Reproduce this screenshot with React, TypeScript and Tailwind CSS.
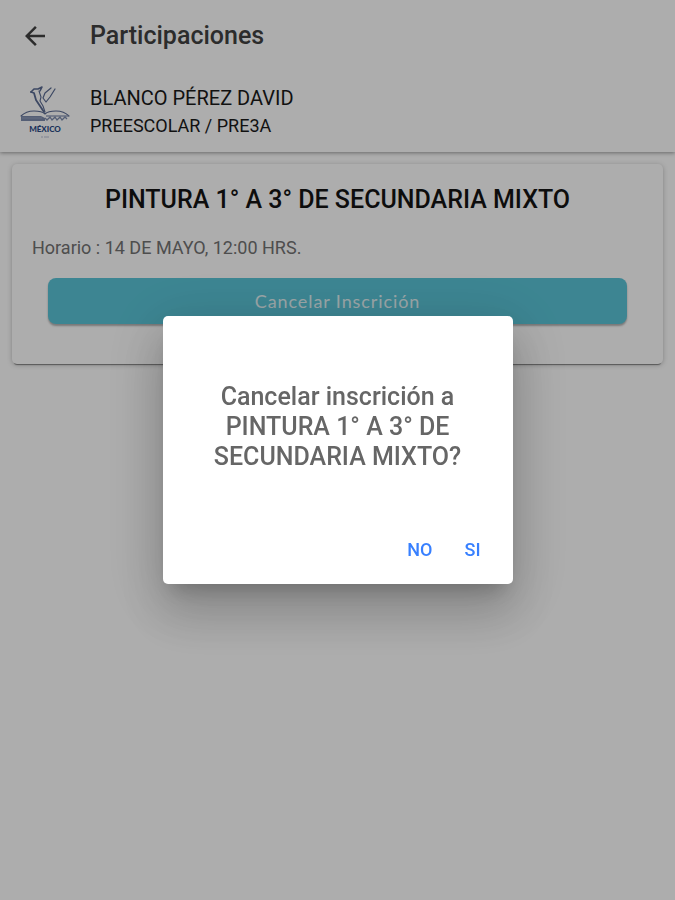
function BackIcon() {
  return (
    <svg viewBox="0 0 24 24" className="size-8" fill="currentColor" aria-hidden="true">
      <path d="M20 11H7.83l5.59-5.59L12 4l-8 8 8 8 1.41-1.41L7.83 13H20v-2z" />
    </svg>
  );
}

function SchoolLogo() {
  return (
    <svg viewBox="0 0 50 54" className="h-[54px] w-[50px] shrink-0" role="img" aria-label="México">
      <g fill="none" stroke="#5a6b93" strokeLinecap="round" strokeLinejoin="round">
        <path d="M11 7 14 4 18 4 22 2 20 6" strokeWidth="1.6" />
        <path d="M11 7 14 8 16 15 20 21 24 27" strokeWidth="1.8" />
        <path d="M19 6 21 12 20 16 23 21 25 27" strokeWidth="1.1" />
        <path d="M31 3 25 8 23 13 26 17 30 12 35 4" strokeWidth="1.2" />
        <path d="M1 31C4 28 9 26 14 26 19 26 23 27 25 29 27 27 31 26 36 26 41 26 46 28 49 31" strokeWidth="1.1" />
      </g>
      <path d="M1 31h20l4 2v3H1z" fill="#7c8bad" />
      <path d="M2 33h20" stroke="#a5b0c9" strokeWidth="0.7" />
      <path d="m25 33 2 2 3-3 2 3 3-3 2 3 3-3 2 3 3-3 2 2" fill="none" stroke="#7c8bad" strokeWidth="1.3" />
      <path d="M26 31h23" stroke="#7c8bad" strokeWidth="1.2" />
      <text x="25" y="47" textAnchor="middle" fill="#2a4a86" fontFamily="Lato, sans-serif" fontSize="8" fontWeight="900">
        MÉXICO
      </text>
      <path d="M21 52h2m1 0h5" stroke="#aab4cc" strokeWidth="0.8" />
    </svg>
  );
}

function Header() {
  return (
    <header className="bg-white px-5 pb-2 shadow-[0_1px_4px_rgba(0,0,0,0.4)]">
      <div className="flex h-[72px] items-center gap-10">
        <button type="button" aria-label="Regresar" className="flex size-[30px] items-center justify-center text-[#424242]">
          <BackIcon />
        </button>
        <h1 className="text-[25px] leading-8 font-medium text-[#424242]">Participaciones</h1>
      </div>
      <div className="flex h-[72px] items-center gap-5 pt-2 text-[#1a1a1a]">
        <SchoolLogo />
        <div>
          <p className="text-[20px] leading-7">BLANCO PÉREZ DAVID</p>
          <p className="text-[18px] leading-7">PREESCOLAR / PRE3A</p>
        </div>
      </div>
    </header>
  );
}

function EventCard() {
  return (
    <section className="mx-3 mt-3 rounded-[5px] bg-white px-5 pt-5 pb-10 shadow-[0_3px_1px_-2px_rgba(0,0,0,0.4),0_1px_5px_rgba(0,0,0,0.25)]">
      <h2 className="text-center text-[25px] leading-8 font-medium text-[#141414]">PINTURA 1° A 3° DE SECUNDARIA MIXTO</h2>
      <p className="mt-5 text-[18px] leading-6 text-[#737373]">Horario : 14 DE MAYO, 12:00 HRS.</p>
      <div className="mt-[18px] px-4">
        <button
          type="button"
          className="block h-[46px] w-full rounded-lg bg-[#5ac5d8] font-[Lato,sans-serif] text-[18px] tracking-wider text-[#e4f4f7] shadow-[0_2px_2px_rgba(0,0,0,0.3)]"
        >
          Cancelar Inscrición
        </button>
      </div>
    </section>
  );
}

function CancelDialog() {
  return (
    <div className="fixed inset-0 flex items-center justify-center bg-black/32">
      <div
        role="alertdialog"
        aria-modal="true"
        aria-labelledby="cancel-title"
        className="w-[350px] rounded-[5px] bg-white px-5 pt-[66px] pb-[14px] shadow-[0_14px_19px_-9px_rgba(0,0,0,0.2),0_30px_48px_4px_rgba(0,0,0,0.14),0_11px_58px_10px_rgba(0,0,0,0.12)]"
      >
        <h2 id="cancel-title" className="px-5 text-center text-[25px] leading-[30px] font-medium text-[#666666]">
          Cancelar inscrición a PINTURA 1° A 3° DE SECUNDARIA MIXTO?
        </h2>
        <div className="mt-[58px] flex justify-end gap-2 text-[18px] leading-6 font-medium text-[#3880ff]">
          <button type="button" className="px-3 py-2">NO</button>
          <button type="button" className="px-3 py-2">SI</button>
        </div>
      </div>
    </div>
  );
}

export default function App() {
  return (
    <div className="min-h-screen bg-white font-[Roboto,sans-serif]">
      <Header />
      <main>
        <EventCard />
      </main>
      <CancelDialog />
    </div>
  );
}
